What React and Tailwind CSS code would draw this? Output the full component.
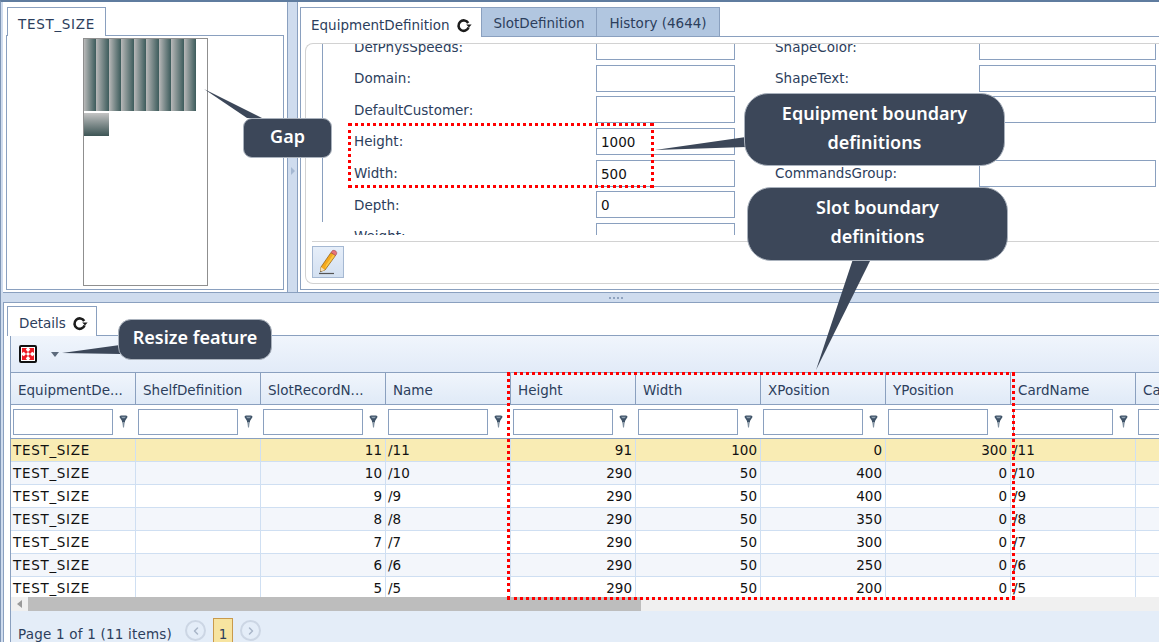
import React from "react";
import { ChevronLeft, ChevronRight } from "lucide-react";

const slots = [1, 2, 3, 4, 5, 6, 7, 8, 9];

const fields = [
  { label: "DefPhysSpeeds:", value: "", right: "ShapeColor:", rightInput: true },
  { label: "Domain:", value: "", right: "ShapeText:", rightInput: true },
  { label: "DefaultCustomer:", value: "", right: "", rightInput: true },
  { label: "Height:", value: "1000", right: "", rightInput: false },
  { label: "Width:", value: "500", right: "CommandsGroup:", rightInput: true },
  { label: "Depth:", value: "0", right: "", rightInput: false },
  { label: "Weight:", value: "", right: "", rightInput: false },
];

const columns = [
  "EquipmentDe...",
  "ShelfDefinition",
  "SlotRecordN...",
  "Name",
  "Height",
  "Width",
  "XPosition",
  "YPosition",
  "CardName",
  "CardType",
];

const rows = [
  ["11", "/11", "91", "100", "0", "300", "/11"],
  ["10", "/10", "290", "50", "400", "0", "/10"],
  ["9", "/9", "290", "50", "400", "0", "/9"],
  ["8", "/8", "290", "50", "350", "0", "/8"],
  ["7", "/7", "290", "50", "300", "0", "/7"],
  ["6", "/6", "290", "50", "250", "0", "/6"],
  ["5", "/5", "290", "50", "200", "0", "/5"],
];

const Funnel = () => (
  <svg width="9" height="13" viewBox="0 0 9 13">
    <path d="M0.5 2 Q0.5 0.5 2 0.5 H7 Q8.5 0.5 8.5 2 L6 6 V7.5 H3 V6 Z" fill="#3f5368" />
    <path d="M2 1.8 H7 L5.6 3.2 H3.4 Z" fill="#8fa0b0" />
    <path d="M3.4 7.5 H5.6 L5 12.5 H4 Z" fill="#7f8f9f" />
  </svg>
);

const Refresh = () => (
  <svg width="16" height="15" viewBox="0 0 16 15" fill="none">
    <path d="M12.2 5 A5.2 5.2 0 1 0 12.6 9.4" stroke="#1c1c1c" strokeWidth="2.6" />
    <path d="M10.2 6.6 H15.6 L13 9.6 Z" fill="#1c1c1c" />
  </svg>
);

const Pencil = () => (
  <svg width="24" height="26" viewBox="0 0 24 26">
    <path d="M5 18 L15 3.5 L19.5 6.5 L9 21 L4.5 22.5 Z" fill="#f5a81c" stroke="#8a5a10" strokeWidth="0.7" />
    <path d="M10 16 L17.5 5.2 L19 6.4 L9 20 Z" fill="#f9c84a" />
    <path d="M15 3.5 L16.5 1.5 Q18 0.8 20 2.2 Q21.2 3.6 20.6 5 L19.5 6.5 Z" fill="#e8737a" stroke="#a04848" strokeWidth="0.6" />
    <path d="M5 18 L9 21 L4.5 22.5 Z" fill="#f4dfb8" />
    <path d="M4.4 22.6 L3.6 23.6 L6 22.2 Z" fill="#222" />
    <path d="M3 24.5 H18" stroke="#555" strokeWidth="1.2" />
  </svg>
);

const ResizeIcon = () => (
  <svg width="18" height="18" viewBox="0 0 18 18">
    <rect x="1" y="1" width="16" height="16" rx="1" fill="#fff" stroke="#111" strokeWidth="2" />
    <path d="M3 3 H8 L6.8 4.8 L9 7 L7 9 L4.8 6.8 L3 8 Z" fill="#ee1c25" />
    <path d="M15 3 V8 L13.2 6.8 L11 9 L9 7 L11.2 4.8 L10 3 Z" fill="#ee1c25" />
    <path d="M3 15 V10 L4.8 11.2 L7 9 L9 11 L6.8 13.2 L8 15 Z" fill="#ee1c25" />
    <path d="M15 15 H10 L11.2 13.2 L9 11 L11 9 L13.2 11.2 L15 10 Z" fill="#ee1c25" />
  </svg>
);

const Callout = ({ className, children }) => (
  <div
    className={`absolute flex items-center justify-center text-center bg-[#3c4759] border border-[#aab2bd] text-white font-semibold text-[18px] leading-[29px] font-['Noto_Sans',sans-serif] pb-[4px] ${className}`}
  >
    {children}
  </div>
);

const App = () => {
  return (
    <div className="relative w-[1159px] h-[642px] overflow-hidden flex flex-col bg-[#cfdcee] border-t-2 border-[#5f7c9f] pl-[2px] text-[14px] text-[#2c3e5c] font-['DejaVu_Sans',sans-serif] border-l border-l-[#7e95b5]">
      {/* top part */}
      <div className="flex h-[290px] shrink-0 bg-white">
        {/* left pane, equipment preview */}
        <div className="w-[284px] shrink-0 flex flex-col pl-[3px] pr-[3px] pt-[5px] pb-[2px]">
          <div className="flex h-[29px] -mb-px pl-[1px]">
            <div className="w-[99px] flex items-center justify-center bg-white border border-b-0 border-[#8aa0bf] z-10 pt-[4px] text-[13.5px] tracking-[0.7px]">
              TEST_SIZE
            </div>
          </div>
          <div className="flex-1 border border-[#8aa0bf] flex">
            <div className="w-[125px] ml-[76px] mt-[2px] mb-[3px] border border-[#8f8f8f] flex flex-col">
              <div className="flex h-[72px] w-[112px]">
                {slots.map((s) => (
                  <div key={s} className="flex-1 bg-gradient-to-r from-[#b9b9b9] to-[#3d5c5c]"></div>
                ))}
              </div>
              <div className="w-[25px] h-[23px] mt-[2px] bg-gradient-to-b from-[#c4c4c4] to-[#3d5555]"></div>
            </div>
          </div>
        </div>

        {/* vertical splitter */}
        <div className="w-[11px] shrink-0 bg-[#cfdcee] flex items-center justify-center border-x border-[#8aa0bf]">
          <div className="w-0 h-0 border-y-[4px] border-y-transparent border-l-[4px] border-l-[#a5b8d2] mt-[47px]"></div>
        </div>

        {/* right pane, tabs and form */}
        <div className="flex-1 min-w-0 flex flex-col pt-[5px] pl-[2px] pb-[2px]">
          <div className="flex h-[30px] -mb-px">
            <div className="w-[182px] flex items-center gap-[6px] pl-[10px] bg-white border border-b-0 border-[#8aa0bf] z-10 pt-[5px] text-[13.5px]">
              EquipmentDefinition
              <Refresh />
            </div>
            <div className="w-[115px] flex items-center justify-center bg-[#b1c6e0] border border-b-0 border-l-0 border-[#8aa0bf] text-[13.5px] pt-[2px]">
              SlotDefinition
            </div>
            <div className="w-[123px] flex items-center justify-center bg-[#b1c6e0] border border-b-0 border-l-0 border-[#8aa0bf] text-[13.5px] pt-[2px]">
              History (4644)
            </div>
          </div>
          <div className="flex-1 border-t border-l border-b border-[#8aa0bf] pt-[6px] pl-[4px] pb-[5px] min-h-0">
            <div className="h-full border border-r-0 border-[#d2d2d2] rounded-l-[8px] flex flex-col">
              <div className="h-[191px] shrink-0 overflow-hidden pl-[16px]">
                <div className="h-full border-l border-[#8aa0bf] pl-[31px]">
                  <div className="grid grid-cols-[242px_139px_40px_204px_177px] auto-rows-[31.6px] items-center mt-[-13px]">
                    {fields.map((f) => (
                      <React.Fragment key={f.label}>
                        <span className="text-[13.5px]">{f.label}</span>
                        <div className="h-[27px] border border-[#8aa0bf] bg-white pl-[4px] leading-[26px] text-[13.5px] text-[#111]">
                          {f.value}
                        </div>
                        <span></span>
                        <span className="text-[13.5px]">{f.right}</span>
                        {f.rightInput ? <div className="h-[27px] border border-[#8aa0bf] bg-white"></div> : <span></span>}
                      </React.Fragment>
                    ))}
                  </div>
                </div>
              </div>
              <div className="mt-[6px] ml-[6px] border-t border-[#d2d2d2] pt-[4px]">
                <div className="w-[32px] h-[32px] flex items-center justify-center bg-gradient-to-b from-[#e6eef9] to-[#d3e0f1] border border-[#a5b8d2]">
                  <Pencil />
                </div>
              </div>
            </div>
          </div>
        </div>
      </div>

      {/* horizontal splitter */}
      <div className="h-[11px] shrink-0 bg-[#cfdcee] border-y border-[#8aa0bf] flex items-center justify-center gap-[2px] pl-[70px]">
        <span className="w-[2px] h-[2px] bg-[#8fa3bf]"></span>
        <span className="w-[2px] h-[2px] bg-[#8fa3bf]"></span>
        <span className="w-[2px] h-[2px] bg-[#8fa3bf]"></span>
        <span className="w-[2px] h-[2px] bg-[#8fa3bf]"></span>
      </div>

      {/* bottom part, details grid */}
      <div className="flex-1 min-h-0 bg-white flex flex-col pt-[3px] pl-[3px] border-l border-[#8aa0bf]">
        <div className="flex h-[30px] -mb-px shrink-0">
          <div className="w-[90px] flex items-center gap-[6px] pl-[11px] bg-white border border-b-0 border-[#8aa0bf] z-10 pt-[4px] text-[13.5px]">
            Details
            <Refresh />
          </div>
        </div>
        <div className="flex-1 min-h-0 ml-[3px] border-t border-l border-[#8aa0bf] flex flex-col overflow-hidden">
          <div className="h-[36px] shrink-0 bg-gradient-to-b from-[#f0f5fc] to-[#e2ebf8] flex items-center pl-[8px] gap-[14px]">
            <ResizeIcon />
            <div className="w-0 h-0 border-x-[4px] border-x-transparent border-t-[5px] border-t-[#5c6a7c]"></div>
          </div>

          <div className="grid grid-cols-[repeat(10,125px)] h-[33px] shrink-0 bg-gradient-to-b from-[#f0f5fc] to-[#e0eaf7] border-y border-[#8aa0bf]">
            {columns.map((c) => (
              <div key={c} className="flex items-center pl-[7px] pt-[3px] border-r border-[#8aa0bf] text-[13.5px] whitespace-nowrap overflow-hidden">
                {c}
              </div>
            ))}
          </div>

          <div className="grid grid-cols-[repeat(10,125px)] h-[34px] shrink-0 bg-white border-b border-[#8aa0bf]">
            {columns.map((c) => (
              <div key={c} className="flex items-center pl-[2px] gap-[6px]">
                <div className="w-[100px] h-[26px] shrink-0 border border-[#8aa0bf] bg-white"></div>
                <Funnel />
              </div>
            ))}
          </div>

          <div className="h-[158px] shrink-0 overflow-hidden">
            {rows.map((r, i) => (
              <div
                key={r[0]}
                className={`grid grid-cols-[repeat(10,125px)] h-[23px] border-b border-[#cfdff2] text-[13.5px] text-[#111] ${
                  i === 0 ? "bg-[#f9ecb4]" : i % 2 === 1 ? "bg-[#f3f6fb]" : "bg-white"
                }`}
              >
                <div className="pl-[2px] border-r border-[#cfdff2] leading-[22px] tracking-[0.7px]">TEST_SIZE</div>
                <div className="border-r border-[#cfdff2]"></div>
                {r.map((v, j) => (
                  <div
                    key={j}
                    className={`border-r border-[#cfdff2] leading-[22px] ${
                      j === 1 || j === 6 ? "pl-[2px] text-left" : "pr-[3px] text-right"
                    }`}
                  >
                    {v}
                  </div>
                ))}
                <div></div>
              </div>
            ))}
          </div>

          <div className="h-[14px] shrink-0 bg-[#f0f0f0] flex items-center">
            <div className="w-[17px] flex justify-center">
              <div className="w-0 h-0 border-y-[4px] border-y-transparent border-r-[5px] border-r-[#9a9a9a]"></div>
            </div>
            <div className="w-[613px] h-full bg-[#bdbdbd]"></div>
          </div>

          <div className="flex-1 min-h-0 bg-[#e4edf8] flex items-start pl-[7px] pt-[7px]">
            <span className="text-[13.5px] mt-[6px] w-[167px] whitespace-nowrap tracking-[0.2px]">Page 1 of 1 (11 items)</span>
            <div className="w-[21px] h-[21px] mt-[2px] rounded-full border-2 border-[#ccd6e4] flex items-center justify-center text-[#a9b6c8]">
              <ChevronLeft size={12} strokeWidth={3} />
            </div>
            <div className="w-[20px] h-[28px] ml-[7px] bg-[#f7e4a0] border border-[#c99a4c] text-center leading-[30px] text-[13.5px]">1</div>
            <div className="w-[21px] h-[21px] mt-[2px] ml-[7px] rounded-full border-2 border-[#ccd6e4] flex items-center justify-center text-[#a9b6c8]">
              <ChevronRight size={12} strokeWidth={3} />
            </div>
          </div>
        </div>
      </div>

      {/* annotations laid over the screenshot */}
      <svg className="absolute left-[-1px] top-[-2px] pointer-events-none" width="1159" height="642">
        <path d="M204 89 L247 118 L262 118 Z" fill="#3c4759" />
        <path d="M655 150 L746 137 L746 147 Z" fill="#3c4759" />
        <path d="M816 370 L853 259 L871 259 Z" fill="#3c4759" />
        <path d="M62 353 L120 345 L120 354 Z" fill="#3c4759" />
      </svg>
      <Callout className="left-[242px] top-[116px] w-[89px] h-[40px] rounded-[9px]">Gap</Callout>
      <Callout className="left-[743px] top-[91px] w-[261px] h-[73px] rounded-[24px]">
        Equipment boundary
        <br />
        definitions
      </Callout>
      <Callout className="left-[746px] top-[185px] w-[261px] h-[74px] rounded-[24px]">
        Slot boundary
        <br />
        definitions
      </Callout>
      <Callout className="left-[117px] top-[317px] w-[154px] h-[41px] rounded-[13px]">Resize feature</Callout>
      <div className="absolute left-[347px] top-[121px] w-[306px] h-[65px] border-[3px] border-dotted border-[#f00]"></div>
      <div className="absolute left-[506px] top-[370px] w-[508px] h-[228px] border-[3px] border-dotted border-[#f00]"></div>
    </div>
  );
};

export default App;
